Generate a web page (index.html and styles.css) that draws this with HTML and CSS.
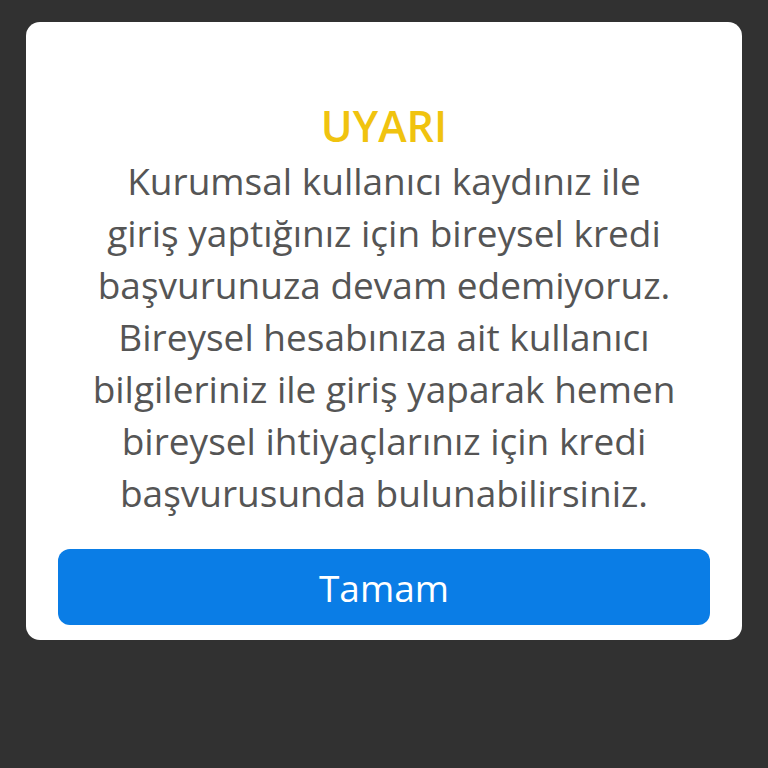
FILE: index.html
```html
<!DOCTYPE html>
<html lang="tr">
<head>
<meta charset="utf-8">
<link rel="stylesheet" href="styles.css">
</head>
<body>
<div class="card">
  <h1 class="title">UYARI</h1>
  <p class="message">Kurumsal kullanıcı kaydınız ile<br>giriş yaptığınız için bireysel kredi<br>başvurunuza devam edemiyoruz.<br>Bireysel hesabınıza ait kullanıcı<br>bilgileriniz ile giriş yaparak hemen<br>bireysel ihtiyaçlarınız için kredi<br>başvurusunda bulunabilirsiniz.</p>
  <button class="btn">Tamam</button>
</div>
</body>
</html>
```
FILE: styles.css
```css
html, body {
  margin: 0;
  padding: 0;
  background: #313131;
  width: 768px;
  height: 768px;
  overflow: hidden;
}
body {
  font-family: "Open Sans", "Noto Sans", sans-serif;
  padding: 22px 26px 0 26px;
  box-sizing: border-box;
}
.card {
  background: #ffffff;
  border-radius: 14px;
  padding: 78px 32px 15px 32px;
  display: flex;
  flex-direction: column;
  align-items: center;
  height: 618px;
  box-sizing: border-box;
}
.title {
  margin: 0;
  color: #f0c30f;
  font-size: 43px;
  font-weight: 600;
  line-height: 52px;
}
.message {
  margin: 3px 0 0 0;
  color: #555555;
  font-size: 37px;
  line-height: 52px;
  text-align: center;
  white-space: nowrap;
}
.btn {
  margin-top: auto;
  width: 100%;
  height: 76px;
  border: none;
  border-radius: 12px;
  background: #0a7de6;
  color: #ffffff;
  font-family: "Open Sans", "Noto Sans", sans-serif;
  font-size: 37px;
  padding: 0;
}
```
